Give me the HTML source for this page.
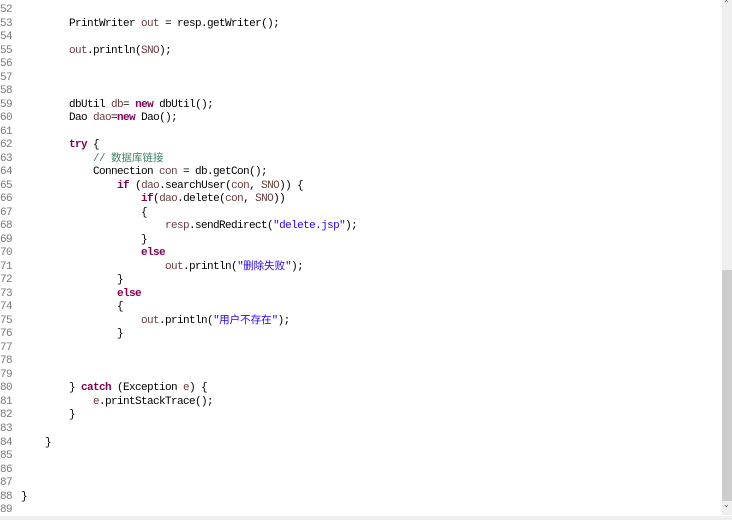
<!DOCTYPE html>
<html><head><meta charset="utf-8"><style>
html,body{margin:0;padding:0;width:732px;height:520px;overflow:hidden;background:#fff}
#code{position:absolute;left:0;top:4px;font-family:"Liberation Mono","Noto Sans CJK SC",monospace;font-size:11px;letter-spacing:-0.6px;line-height:13.51px;color:#000;white-space:pre}
.ln{display:inline-block;width:21px;color:#787878;letter-spacing:-0.6px}
.k{color:#7f0055;font-weight:bold}
.v{color:#6a3e3e}
.s{color:#2a00ff}
.c{color:#3f7f5f}
.cj{letter-spacing:0;font-size:10.5px}
#track{position:absolute;left:722px;top:0;width:10px;height:515px;background:#efefef}
#thumb{position:absolute;left:722px;top:270px;width:10px;height:231px;background:#cdcdcd}
#hb{position:absolute;left:0;top:516px;width:732px;height:4px;background:#efefef}
.arr{position:absolute;left:723px;font-size:8px;color:#555;font-family:"DejaVu Sans",sans-serif}
</style></head><body>
<div id="code"><span class="ln">52</span>
<span class="ln">53</span>        PrintWriter <span class="v">out</span> = resp.getWriter();
<span class="ln">54</span>
<span class="ln">55</span>        <span class="v">out</span>.println(<span class="v">SNO</span>);
<span class="ln">56</span>
<span class="ln">57</span>
<span class="ln">58</span>
<span class="ln">59</span>        dbUtil <span class="v">db</span>= <span class="k">new</span> dbUtil();
<span class="ln">60</span>        Dao <span class="v">dao</span>=<span class="k">new</span> Dao();
<span class="ln">61</span>
<span class="ln">62</span>        <span class="k">try</span> {
<span class="ln">63</span>            <span class="c">// <span class="cj">数据库链接</span></span>
<span class="ln">64</span>            Connection <span class="v">con</span> = db.getCon();
<span class="ln">65</span>                <span class="k">if</span> (<span class="v">dao</span>.searchUser(<span class="v">con</span>, <span class="v">SNO</span>)) {
<span class="ln">66</span>                    <span class="k">if</span>(<span class="v">dao</span>.delete(<span class="v">con</span>, <span class="v">SNO</span>))
<span class="ln">67</span>                    {
<span class="ln">68</span>                        <span class="v">resp</span>.sendRedirect(<span class="s">"delete.jsp"</span>);
<span class="ln">69</span>                    }
<span class="ln">70</span>                    <span class="k">else</span>
<span class="ln">71</span>                        <span class="v">out</span>.println(<span class="s">"<span class="cj">删除失败</span>"</span>);
<span class="ln">72</span>                }
<span class="ln">73</span>                <span class="k">else</span>
<span class="ln">74</span>                {
<span class="ln">75</span>                    <span class="v">out</span>.println(<span class="s">"<span class="cj">用户不存在</span>"</span>);
<span class="ln">76</span>                }
<span class="ln">77</span>
<span class="ln">78</span>
<span class="ln">79</span>
<span class="ln">80</span>        } <span class="k">catch</span> (Exception <span class="v">e</span>) {
<span class="ln">81</span>            <span class="v">e</span>.printStackTrace();
<span class="ln">82</span>        }
<span class="ln">83</span>
<span class="ln">84</span>    }
<span class="ln">85</span>
<span class="ln">86</span>
<span class="ln">87</span>
<span class="ln">88</span>}
<span class="ln">89</span></div>
<div id="track"></div><div id="thumb"></div><div id="hb"></div>
<div class="arr" style="top:-1px">&#8963;</div>
<div class="arr" style="top:500px">&#8964;</div>
</body></html>
